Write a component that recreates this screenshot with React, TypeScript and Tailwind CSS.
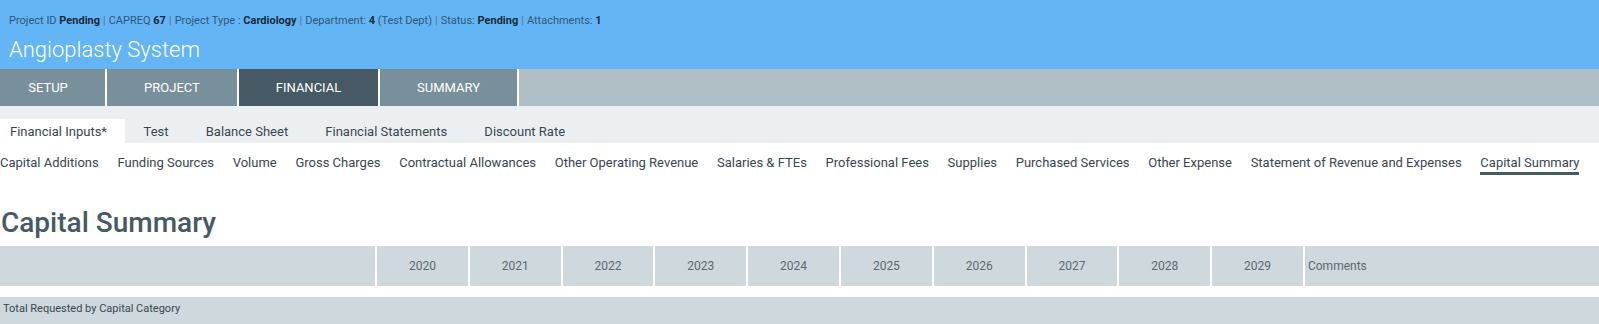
import React from "react";

const mainTabs = [
  { label: "SETUP", width: "w-[105px] pr-[9px]", active: false },
  { label: "PROJECT", width: "w-[130px]", active: false },
  { label: "FINANCIAL", width: "w-[139px]", active: true },
  { label: "SUMMARY", width: "w-[137px]", active: false },
];

const subTabs = ["Financial Inputs*", "Test", "Balance Sheet", "Financial Statements", "Discount Rate"];

const navItems = [
  "Capital Additions",
  "Funding Sources",
  "Volume",
  "Gross Charges",
  "Contractual Allowances",
  "Other Operating Revenue",
  "Salaries & FTEs",
  "Professional Fees",
  "Supplies",
  "Purchased Services",
  "Other Expense",
  "Statement of Revenue and Expenses",
  "Capital Summary",
];

const years = ["2020", "2021", "2022", "2023", "2024", "2025", "2026", "2027", "2028", "2029"];

function Sep() {
  return <span className="mx-[3px] text-[#4f7593]">|</span>;
}

export default function App() {
  return (
    <div className="w-[1599px] min-h-[324px] bg-white font-['Roboto','Liberation_Sans',sans-serif] overflow-hidden">
      {/* Project header */}
      <header className="h-[69px] bg-[#64b5f6] pl-[9px] pt-[14px]">
        <div className="text-[11px] leading-[14px] text-[#2f5878] whitespace-nowrap">
          Project ID <b className="text-[#1b2a36]">Pending</b>
          <Sep />
          CAPREQ <b className="text-[#1b2a36]">67</b>
          <Sep />
          Project Type : <b className="text-[#1b2a36]">Cardiology</b>
          <Sep />
          Department: <b className="text-[#1b2a36]">4</b> (Test Dept)
          <Sep />
          Status: <b className="text-[#1b2a36]">Pending</b>
          <Sep />
          Attachments: <b className="text-[#1b2a36]">1</b>
        </div>
        <h1 className="mt-[9px] text-[22px] leading-[26px] font-light text-white">Angioplasty System</h1>
      </header>

      {/* Main tabs */}
      <nav className="flex h-[37px] gap-[2px] bg-white">
        {mainTabs.map((t) => (
          <div
            key={t.label}
            className={`${t.width} flex items-center justify-center text-[13px] font-normal text-white ${
              t.active ? "bg-[#455a64]" : "bg-[#78909c]"
            }`}
          >
            {t.label}
          </div>
        ))}
        <div className="flex-1 bg-[#b0bec5]" />
      </nav>

      {/* Sub tabs */}
      <div className="flex h-[37px] items-end bg-[#eceff1]">
        {subTabs.map((t, i) => (
          <div
            key={t}
            className={`h-[24px] flex items-center pt-[1px] text-[13px] text-[#37474f] ${
              i === 0 ? "bg-white pl-[10px] pr-[18px]" : "px-[18.6px]"
            }`}
          >
            {t}
          </div>
        ))}
      </div>

      {/* Financial input pages */}
      <div className="flex h-[32px] items-start gap-[18.7px] pt-[11px] text-[13px] text-[#37474f] whitespace-nowrap">
        {navItems.map((n) => (
          <span
            key={n}
            className={`leading-[17px] ${n === "Capital Summary" ? "border-b-[3px] border-[#455a64] pb-[1px]" : ""}`}
          >
            {n}
          </span>
        ))}
      </div>

      <h2 className="mt-[32px] pl-[1px] text-[28px] leading-[32px] font-medium text-[#455a64]">Capital Summary</h2>

      {/* Table */}
      <div className="mt-[7px] flex h-[40px] gap-[2px] text-[12px] text-[#5b6870]">
        <div className="w-[375px] bg-[#cfd8dc]" />
        {years.map((y) => (
          <div key={y} className="w-[90.8px] flex items-center justify-center bg-[#cfd8dc]">
            {y}
          </div>
        ))}
        <div className="flex-1 flex items-center pl-[3px] bg-[#cfd8dc]">Comments</div>
      </div>
      <div className="mt-[11px] h-[30px] bg-[#cfd8dc] pl-[3px] pt-[4px] text-[11px] text-[#37474f]">
        Total Requested by Capital Category
      </div>
    </div>
  );
}
